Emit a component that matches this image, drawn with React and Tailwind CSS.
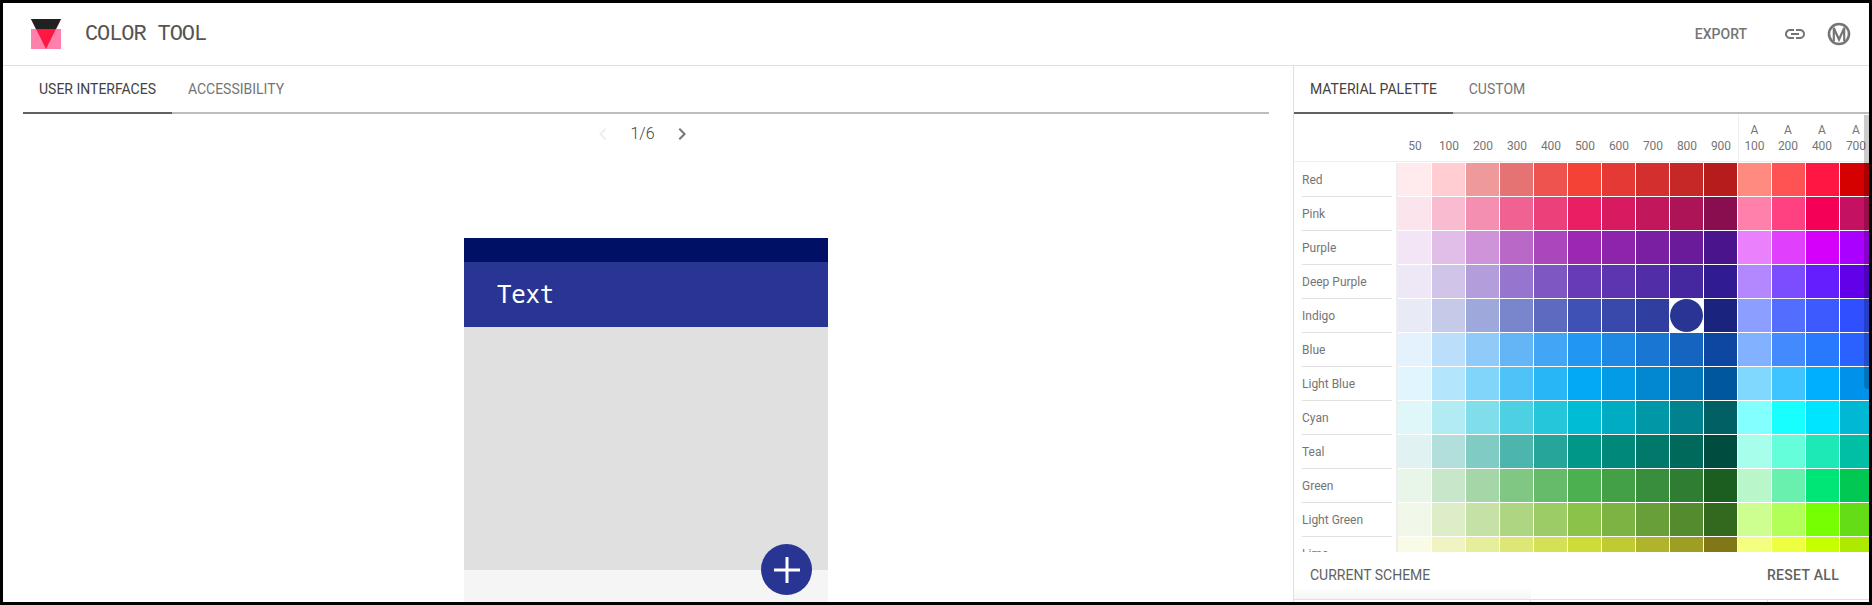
const shades = ["50","100","200","300","400","500","600","700","800","900"];
const accents = ["100","200","400","700"];
const rows = [
  ["Red", "FFEBEE FFCDD2 EF9A9A E57373 EF5350 F44336 E53935 D32F2F C62828 B71C1C FF8A80 FF5252 FF1744 D50000"],
  ["Pink", "FCE4EC F8BBD0 F48FB1 F06292 EC407A E91E63 D81B60 C2185B AD1457 880E4F FF80AB FF4081 F50057 C51162"],
  ["Purple", "F3E5F5 E1BEE7 CE93D8 BA68C8 AB47BC 9C27B0 8E24AA 7B1FA2 6A1B9A 4A148C EA80FC E040FB D500F9 AA00FF"],
  ["Deep Purple", "EDE7F6 D1C4E9 B39DDB 9575CD 7E57C2 673AB7 5E35B1 512DA8 4527A0 311B92 B388FF 7C4DFF 651FFF 6200EA"],
  ["Indigo", "E8EAF6 C5CAE9 9FA8DA 7986CB 5C6BC0 3F51B5 3949AB 303F9F 283593 1A237E 8C9EFF 536DFE 3D5AFE 304FFE"],
  ["Blue", "E3F2FD BBDEFB 90CAF9 64B5F6 42A5F5 2196F3 1E88E5 1976D2 1565C0 0D47A1 82B1FF 448AFF 2979FF 2962FF"],
  ["Light Blue", "E1F5FE B3E5FC 81D4FA 4FC3F7 29B6F6 03A9F4 039BE5 0288D1 0277BD 01579B 80D8FF 40C4FF 00B0FF 0091EA"],
  ["Cyan", "E0F7FA B2EBF2 80DEEA 4DD0E1 26C6DA 00BCD4 00ACC1 0097A7 00838F 006064 84FFFF 18FFFF 00E5FF 00B8D4"],
  ["Teal", "E0F2F1 B2DFDB 80CBC4 4DB6AC 26A69A 009688 00897B 00796B 00695C 004D40 A7FFEB 64FFDA 1DE9B6 00BFA5"],
  ["Green", "E8F5E9 C8E6C9 A5D6A7 81C784 66BB6A 4CAF50 43A047 388E3C 2E7D32 1B5E20 B9F6CA 69F0AE 00E676 00C853"],
  ["Light Green", "F1F8E9 DCEDC8 C5E1A5 AED581 9CCC65 8BC34A 7CB342 689F38 558B2F 33691E CCFF90 B2FF59 76FF03 64DD17"],
  ["Lime", "F9FBE7 F0F4C3 E6EE9C DCE775 D4E157 CDDC39 C0CA33 AFB42B 9E9D24 827717 F4FF81 EEFF41 C6FF00 AEEA00"],
];

function Logo() {
  return (
    <svg width="30" height="30" viewBox="0 0 30 30" className="shrink-0">
      <rect x="0" y="10" width="30" height="20" fill="#ff80ab" />
      <polygon points="0,0 30,0 15,30" fill="#ff1744" />
      <polygon points="0,0 30,0 25,10 5,10" fill="#212121" />
    </svg>
  );
}

function MaterialMark() {
  return (
    <svg width="24" height="24" viewBox="0 0 24 24" fill="none" stroke="#757575">
      <circle cx="12" cy="12" r="10" strokeWidth="2.600" />
      <path d="M6.800 19V5.500M17.200 19V5.500M6.800 6L12 17.500L17.200 6" strokeWidth="2.200" />
    </svg>
  );
}

function LinkIcon() {
  return (
    <svg width="24" height="24" viewBox="0 0 24 24" fill="#757575">
      <path d="M3.900 12c0-1.710 1.390-3.100 3.100-3.100h4V7H7c-2.760 0-5 2.240-5 5s2.240 5 5 5h4v-1.900H7c-1.710 0-3.100-1.390-3.100-3.100zM8 13h8v-2H8v2zm9-6h-4v1.900h4c1.710 0 3.100 1.390 3.100 3.100s-1.390 3.100-3.100 3.100h-4V17h4c2.760 0 5-2.240 5-5s-2.240-5-5-5z" />
    </svg>
  );
}

function Chevron({ dir, color }) {
  return (
    <svg width="24" height="24" viewBox="0 0 24 24" fill={color}>
      {dir === "left"
        ? <path d="M15.410 7.410L14 6l-6 6 6 6 1.410-1.410L10.830 12z" />
        : <path d="M10 6L8.590 7.410 13.170 12l-4.580 4.590L10 18l6-6z" />}
    </svg>
  );
}

export default function App() {
  return (
    <div className="w-[1872px] h-[605px] border-[3px] border-black bg-white overflow-hidden flex flex-col font-['Roboto',sans-serif]">
      <header className="h-[63px] shrink-0 border-b border-[#e0e0e0] flex items-center pl-[28px] pr-[18px]">
        <Logo />
        <h1 className="ml-[24px] text-[22px] font-normal font-['Liberation_Mono',monospace] text-[#555555] tracking-[-1.100px]">COLOR TOOL</h1>
        <div className="ml-auto flex items-center">
          <span className="text-[14px] font-medium text-[#757575] mr-[36px]">EXPORT</span>
          <span className="mr-[20px] flex"><LinkIcon /></span>
          <MaterialMark />
        </div>
      </header>

      <main className="flex-1 flex min-h-0">
        <section className="w-[1290px] shrink-0 flex flex-col">
          <nav className="ml-[20px] mr-[24px] h-[48px] shrink-0 flex border-b-2 border-[#bdbdbd] text-[14px]">
            <div className="w-[149px] h-[48px] border-b-2 border-[#616161] flex items-center justify-center text-[#424242]">USER INTERFACES</div>
            <div className="w-[128px] h-[46px] flex items-center justify-center text-[#757575]">ACCESSIBILITY</div>
          </nav>
          <div className="h-[36px] mt-[2px] pr-[11px] flex items-center justify-center text-[16px] font-light text-[#424242]">
            <Chevron dir="left" color="#eeeeee" />
            <span className="mx-[15px]">1/6</span>
            <Chevron dir="right" color="#757575" />
          </div>
          <div className="mt-[86px] ml-[461px] w-[364px] flex-1 flex flex-col relative">
            <div className="h-[24px] bg-[#001064]" />
            <div className="h-[65px] bg-[#283593] flex items-center pl-[33px] text-[24px] font-['DejaVu_Sans_Mono',monospace] text-white tracking-[-0.200px]">Text</div>
            <div className="h-[243px] bg-[#e0e0e0]" />
            <div className="flex-1 bg-[#f5f5f5]" />
            <div className="absolute left-[297px] top-[306px] w-[51px] h-[51px] rounded-full bg-[#283593] flex items-center justify-center">
              <svg width="26" height="26" viewBox="0 0 26 26" fill="white"><path d="M11.500 0h3v11.500H26v3H14.500V26h-3V14.500H0v-3h11.500z" /></svg>
            </div>
          </div>
        </section>

        <aside className="flex-1 min-w-0 border-l border-[#e0e0e0] flex flex-col relative">
          <nav className="h-[48px] shrink-0 flex border-b-2 border-[#bdbdbd] text-[14px]">
            <div className="w-[159px] h-[48px] border-b-2 border-[#616161] flex items-center justify-center text-[#424242]">MATERIAL PALETTE</div>
            <div className="w-[88px] h-[46px] flex items-center justify-center text-[#757575]">CUSTOM</div>
          </nav>
          <div className="h-[48px] shrink-0 border-b border-[#eeeeee] flex pl-[104px] text-[12px] leading-[16px] text-[#757575] overflow-hidden">
            {shades.map((s) => (
              <div key={s} className="w-[34px] shrink-0 flex items-end justify-center pb-[7px]">{s}</div>
            ))}
            {accents.map((s, i) => (
              <div key={s} className={`w-[34px] shrink-0 flex flex-col items-center justify-end pb-[7px] pr-[2px] ${i === 0 ? "border-l border-[#eeeeee]" : ""}`}>
                <span>A</span><span>{s}</span>
              </div>
            ))}
          </div>
          <div className="flex-1 min-h-0 overflow-hidden pt-[1px]">
            {rows.map(([name, cols]) => (
              <div key={name} className="flex h-[34px]">
                <div className="w-[104px] shrink-0 border-r-2 border-[#eeeeee] pl-[8px] pr-[4px]">
                  <div className="h-[34px] border-b border-[#e0e0e0] flex items-center text-[12px] text-[#757575]">{name}</div>
                </div>
                {cols.split(" ").map((c, i) => {
                  const selected = name === "Indigo" && i === 8;
                  return (
                    <div key={c} className="w-[34px] h-[34px] shrink-0 pr-[1px] pb-[1px]">
                      {selected
                        ? <div className="w-[33px] h-[33px] rounded-full bg-[#283593]" />
                        : <div className="w-[33px] h-[33px]" style={{ backgroundColor: "#" + c }} />}
                    </div>
                  );
                })}
              </div>
            ))}
          </div>
          <div className="h-[47px] shrink-0 bg-white flex items-center justify-between pl-[16px] pr-[30px] text-[14px] text-[#616161]">
            <span>CURRENT SCHEME</span>
            <span className="font-medium tracking-[0.300px]">RESET ALL</span>
          </div>
          <div className="h-[3px] shrink-0 border-t border-[#e0e0e0] flex">
            <div className="w-[237px] border-r border-[#e0e0e0]" />
            <div className="w-[237px] border-r border-[#e0e0e0]" />
          </div>
          <div className="absolute left-0 bottom-[3px] w-[237px] h-[12px] bg-gradient-to-b from-transparent to-black/[0.04]" />
          <div className="absolute right-0 top-[49px] w-[5px] h-[274px] rounded-bl-[4px] bg-black/20" />
        </aside>
      </main>
    </div>
  );
}
